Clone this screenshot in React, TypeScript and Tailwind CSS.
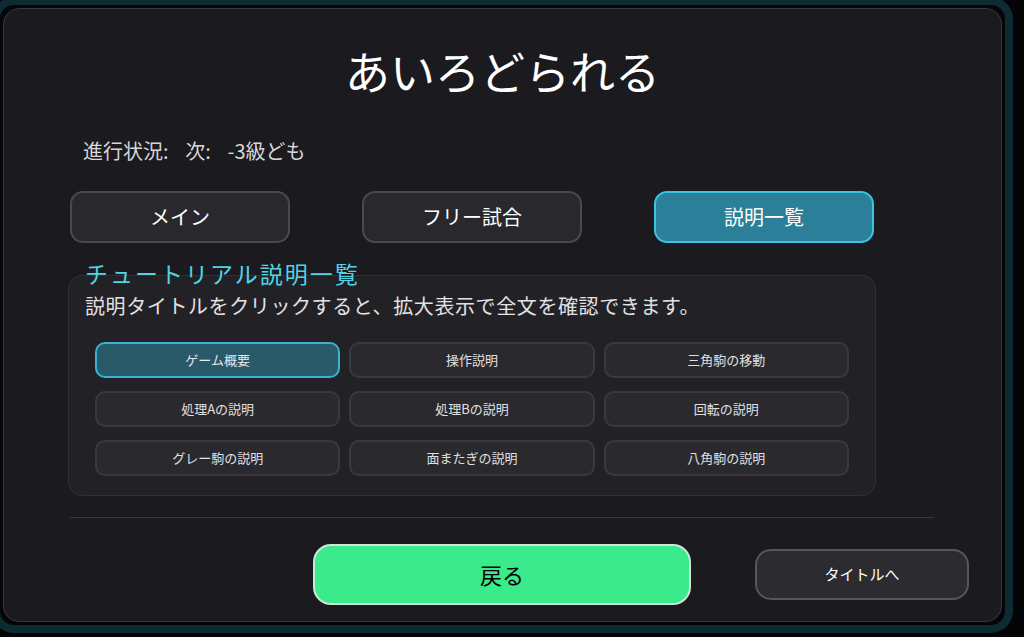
import React from "react";

const font = { fontFamily: '"Noto Sans CJK JP", "Noto Sans", sans-serif' };

const items = [
  "ゲーム概要",
  "操作説明",
  "三角駒の移動",
  "処理Aの説明",
  "処理Bの説明",
  "回転の説明",
  "グレー駒の説明",
  "面またぎの説明",
  "八角駒の説明",
];

export default function App() {
  return (
    <div className="w-[1024px] h-[637px] bg-[#040506] overflow-hidden" style={font}>
      <div className="-ml-[8px] -mt-[3px] w-[1021px] h-[636px] rounded-[22px] border-[8px] border-[#0e2a33] bg-[#050607] p-[3px]">
        <div className="h-full w-full rounded-[16px] border border-[#38373d] bg-[#1b1a1f] flex flex-col">
          <h1 className="mt-[39px] text-center text-[45px] leading-none text-white font-normal">
            あいろどられる
          </h1>
          <div className="mt-[44px] ml-[79px] text-[20px] leading-[28px] text-[#d6d6d8] whitespace-pre">
            {"進行状況:\u2002\u2004次:\u2002\u2004-3級ども"}
          </div>
          <div className="mt-[26px] ml-[66px] flex gap-[72px]">
            <button className="w-[220px] h-[52px] rounded-[13px] border-2 border-[#4a494f] bg-[#29282d] text-[20px] text-white">
              メイン
            </button>
            <button className="w-[220px] h-[52px] rounded-[13px] border-2 border-[#4a494f] bg-[#29282d] text-[20px] text-white">
              フリー試合
            </button>
            <button className="w-[220px] h-[52px] rounded-[13px] border-2 border-[#3cc3e3] bg-[#2b7f98] text-[20px] text-white">
              説明一覧
            </button>
          </div>
          <div className="relative z-10 mt-[16px] ml-[81px] text-[23px] leading-[28px] tracking-[2px] text-[#52d3e6]">
            チュートリアル説明一覧
          </div>
          <div className="-mt-[12px] ml-[64px] w-[808px] rounded-[14px] border border-[#313036] bg-[#222126] pt-[16px] pb-[19px] px-[26px]">
            <div className="relative z-10 ml-[-10px] text-[20px] leading-[28px] tracking-[0.6px] text-[#e2e2e4]">
              説明タイトルをクリックすると、拡大表示で全文を確認できます。
            </div>
            <div className="mt-[22px] grid grid-cols-3 gap-x-[9px] gap-y-[13px]">
              {items.map((t, i) => (
                <button
                  key={t}
                  className={
                    i === 0
                      ? "h-[36px] rounded-[10px] border-2 border-[#3ab3d2] bg-[#285a6a] text-[13px] text-[#e8e8ea]"
                      : "h-[36px] rounded-[10px] border-2 border-[#3a3940] bg-[#2a292e] text-[13px] text-[#e0e0e2]"
                  }
                >
                  {t}
                </button>
              ))}
            </div>
          </div>
          <div className="mt-[21px] ml-[66px] w-[864px] h-px bg-[#38373c]" />
          <div className="mt-[26px] ml-[309px] flex items-center gap-[64px]">
            <button className="w-[378px] h-[61px] rounded-[18px] border-2 border-[#cfe6d6] bg-[#3bea8b] text-[22px] text-black">
              戻る
            </button>
            <button className="w-[214px] h-[51px] rounded-[16px] border-2 border-[#57565c] bg-[#2c2b30] text-[15px] text-white">
              タイトルへ
            </button>
          </div>
        </div>
      </div>
    </div>
  );
}
